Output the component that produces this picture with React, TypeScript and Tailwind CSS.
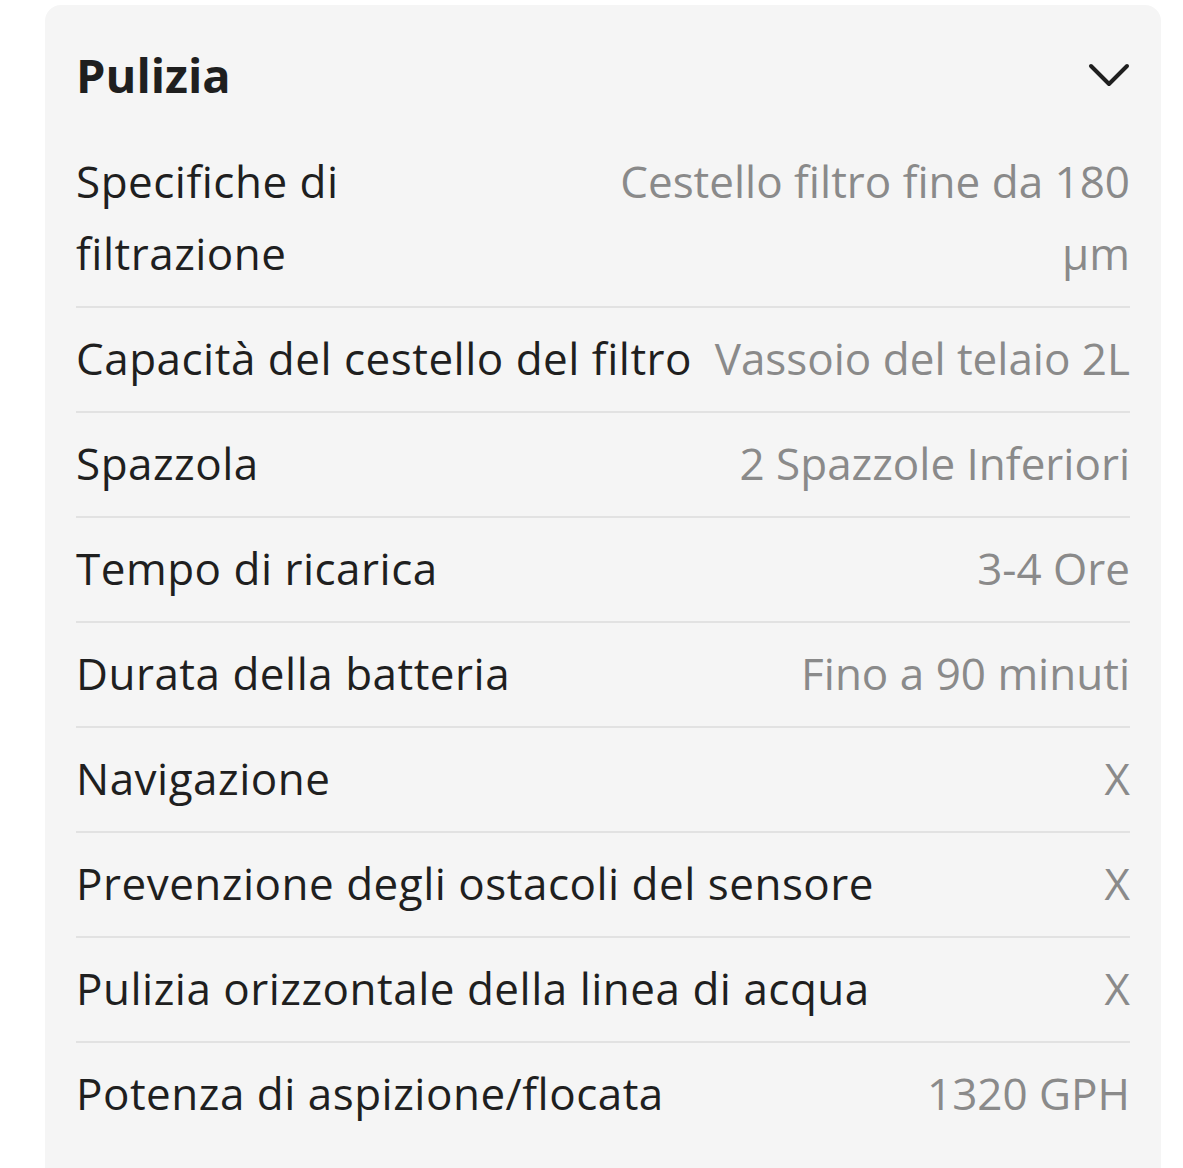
import { ReactNode } from 'react'

type Spec = { label: ReactNode; value: ReactNode }

const specs: Spec[] = [
  { label: <>Specifiche di<br />filtrazione</>, value: <>Cestello filtro fine da 180<br />µm</> },
  { label: 'Capacità del cestello del filtro', value: 'Vassoio del telaio 2L' },
  { label: 'Spazzola', value: '2 Spazzole Inferiori' },
  { label: 'Tempo di ricarica', value: '3-4 Ore' },
  { label: 'Durata della batteria', value: 'Fino a 90 minuti' },
  { label: 'Navigazione', value: 'X' },
  { label: 'Prevenzione degli ostacoli del sensore', value: 'X' },
  { label: 'Pulizia orizzontale della linea di acqua', value: 'X' },
  { label: 'Potenza di aspizione/flocata', value: '1320 GPH' },
]

function Chevron() {
  return (
    <svg width="42" height="24" viewBox="0 0 42 24" fill="none" className="text-[#1f1f1f]">
      <polyline points="3,3 21,21 39,3" stroke="currentColor" strokeWidth="4" strokeLinecap="round" strokeLinejoin="round" />
    </svg>
  )
}

export default function App() {
  return (
    <div className="min-h-[1168px] bg-white pl-[45px] pr-[22px] pt-[5px] overflow-hidden" style={{ fontFamily: '"Open Sans", "Noto Sans", sans-serif' }}>
      <div className="rounded-2xl bg-[#f5f5f5] px-[31px] pb-10">
        <div className="flex items-center justify-between h-[126px] pt-[14px]">
          <div className="text-[47px] font-bold text-[#1f1f1f] leading-none">Pulizia</div>
          <Chevron />
        </div>

        {specs.map((s, i) => (
          <div
            key={i}
            className={`flex justify-between gap-2 pt-[14px] pb-[17px] text-[44px] leading-[72px] whitespace-nowrap ${i < specs.length - 1 ? 'border-b-2 border-[#e2e2e2]' : ''}`}
          >
            <div className="text-[#1f1f1f] tracking-[0.5px]">{s.label}</div>
            <div className="text-right text-[#8a8a8a]">{s.value}</div>
          </div>
        ))}
      </div>
    </div>
  )
}
